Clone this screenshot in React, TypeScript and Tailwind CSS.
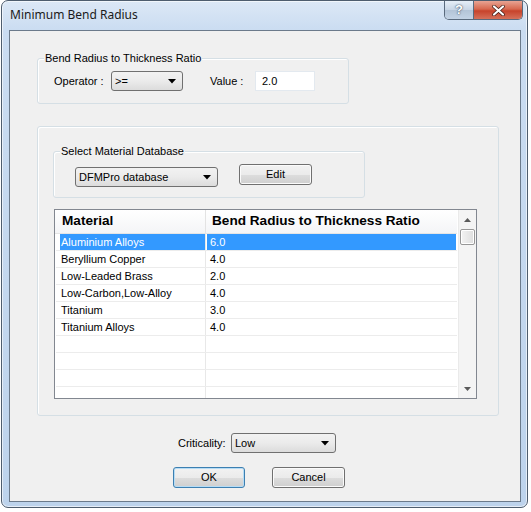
import React from "react";

const rows: [string, string][] = [
  ["Aluminium Alloys", "6.0"],
  ["Beryllium Copper", "4.0"],
  ["Low-Leaded Brass", "2.0"],
  ["Low-Carbon,Low-Alloy", "4.0"],
  ["Titanium", "3.0"],
  ["Titanium Alloys", "4.0"],
  ["", ""],
  ["", ""],
  ["", ""],
  ["", ""],
];

function Arrow() {
  return (
    <svg width="8" height="5" viewBox="0 0 8 5" className="shrink-0">
      <path d="M0 0 H8 L4 4.5 Z" fill="#000" />
    </svg>
  );
}

function Combo({ value, width }: { value: string; width: string }) {
  return (
    <div
      className={`${width} h-[20px] flex items-center justify-between pl-[3px] pr-[6px] border border-[#707070] rounded-[3px] bg-gradient-to-b from-[#f2f2f2] via-[#ebebeb] to-[#dcdcdc] text-[11px] text-black`}
    >
      <span>{value}</span>
      <Arrow />
    </div>
  );
}

function Button({ label, width, focused }: { label: string; width: string; focused?: boolean }) {
  return (
    <button
      className={`${width} h-[21px] rounded-[3px] border ${
        focused ? "border-[#3c7fb1] shadow-[inset_0_0_0_1px_#b6dcf5]" : "border-[#707070] shadow-[inset_0_0_0_1px_#fbfbfb]"
      } bg-[linear-gradient(#f2f2f2_0%,#ebebeb_50%,#dddddd_51%,#cfcfcf_100%)] text-[11px] text-black`}
    >
      {label}
    </button>
  );
}

function Group({ title, className, children }: { title: string; className: string; children: React.ReactNode }) {
  return (
    <div className={`relative border border-[#d5dfe5] rounded-[3px] shadow-[inset_1px_1px_0_#fff] ${className}`}>
      <span className="absolute left-[6px] -top-[8px] px-[1px] bg-[#f0f0f0] text-[11px] leading-[14px] text-black">
        {title}
      </span>
      {children}
    </div>
  );
}

export default function App() {
  return (
    <div
      className="w-[531px] h-[512px] bg-white overflow-hidden"
      style={{ fontFamily: '"Liberation Sans", Arial, sans-serif' }}
    >
      <div className="ml-[1px] w-[527px] h-[508px] rounded-[7px] border border-[#4e5d6e] bg-[linear-gradient(#dce8f6_0px,#cadcf1_30px,#bdd3ec_100%)] shadow-[inset_0_0_0_1px_rgba(255,255,255,0.6)] flex flex-col">
        {/* title bar */}
        <div className="h-[29px] flex items-start justify-between shrink-0">
          <span
            className="ml-[8px] mt-[5px] text-[12px] text-[#1a1a1a]"
            style={{ fontFamily: '"Noto Sans", "Open Sans", sans-serif' }}
          >
            Minimum Bend Radius
          </span>
          <div className="flex mr-[4px] h-[19px] rounded-b-[5px] border border-t-0 border-[#5a6a7d] overflow-hidden">
            <div className="w-[29px] flex items-center justify-center bg-[linear-gradient(#e6eef7,#c7d5e5_50%,#b3c4d7_51%,#c3d3e5)] border-r border-[#5a6a7d]">
              <span className="text-[13px] font-bold text-white [text-shadow:0_0_2px_#44546a,0_0_1px_#44546a]">?</span>
            </div>
            <div className="w-[48px] flex items-center justify-center bg-[linear-gradient(#e8a493,#d7684f_45%,#c7432b_55%,#d5705a)]">
              <svg width="13" height="11" viewBox="0 0 13 11">
                <path d="M2 1.5 L11 9.5 M11 1.5 L2 9.5" stroke="#3c1a14" strokeWidth="3.6" strokeLinecap="round" />
                <path d="M2 1.5 L11 9.5 M11 1.5 L2 9.5" stroke="#fff" strokeWidth="2.2" strokeLinecap="round" />
              </svg>
            </div>
          </div>
        </div>

        {/* client area */}
        <div className="ml-[7px] w-[512px] h-[472px] border border-[#6b7a8b] bg-[#f0f0f0] flex flex-col text-[11px] text-black">
          <Group title="Bend Radius to Thickness Ratio" className="ml-[27px] mt-[27px] w-[312px] h-[46px]">
            <div className="flex items-center mt-[12px]">
              <span className="ml-[16px] w-[57px]">Operator :</span>
              <Combo value=">=" width="w-[72px]" />
              <span className="ml-[27px] w-[45px]">Value :</span>
              <div className="w-[60px] h-[20px] bg-white border border-[#e3e9ef] flex items-center pl-[6px]">2.0</div>
            </div>
          </Group>

          <div className="ml-[27px] mt-[22px] w-[462px] h-[290px] border border-[#d5dfe5] rounded-[3px] shadow-[inset_1px_1px_0_#fff] flex flex-col">
            <Group title="Select Material Database" className="ml-[15px] mt-[24px] w-[312px] h-[47px]">
              <div className="flex items-start mt-[12px]">
                <div className="ml-[21px] mt-[3px]">
                  <Combo value="DFMPro database" width="w-[143px]" />
                </div>
                <div className="ml-[21px]">
                  <Button label="Edit" width="w-[73px]" />
                </div>
              </div>
            </Group>

            {/* table */}
            <div className="ml-[16px] mt-[11px] w-[423px] h-[190px] border border-[#828790] bg-white flex overflow-hidden">
              <div className="w-[403px] flex flex-col">
                <div className="h-[24px] flex shrink-0 bg-gradient-to-b from-white to-[#f4f5f7] border-b border-[#e5e5e5] font-bold text-[13.6px]">
                  <div className="w-[151px] flex items-center pl-[7px] border-r border-[#e3e3e3]">Material</div>
                  <div className="flex-1 flex items-center pl-[6px]">Bend Radius to Thickness Ratio</div>
                </div>
                {rows.map(([name, ratio], i) => {
                  const sel = i === 0;
                  return (
                    <div key={i} className="h-[17px] flex shrink-0 ml-[1px] border-b border-[#ececec] text-[11px]">
                      <div className="w-[150px] pl-[4px] border-r border-[#e8e8e8] flex">
                        <div className={`flex-1 flex items-center pl-[1px] ${sel ? "bg-[#3399ff] text-white" : ""}`}>{name}</div>
                      </div>
                      <div className="w-[250px] pl-[1px] flex">
                        <div className={`flex-1 flex items-center pl-[3px] ${sel ? "bg-[#3399ff] text-white" : ""}`}>{ratio}</div>
                      </div>
                    </div>
                  );
                })}
              </div>
              {/* scrollbar */}
              <div className="w-[18px] ml-[1px] bg-[#f4f4f4] border-l border-[#eaeaea] flex flex-col items-center">
                <div className="h-[19px] flex items-center justify-center">
                  <svg width="7" height="4" viewBox="0 0 7 4">
                    <path d="M0 4 L3.5 0 L7 4 Z" fill="#5a5a5a" />
                  </svg>
                </div>
                <div className="w-[15px] h-[16px] rounded-[2px] border border-[#979797] bg-gradient-to-r from-[#f3f3f3] to-[#dedede] shadow-[inset_0_0_0_1px_#fff]" />
                <div className="flex-1" />
                <div className="h-[19px] flex items-center justify-center">
                  <svg width="7" height="4" viewBox="0 0 7 4">
                    <path d="M0 0 L7 0 L3.5 4 Z" fill="#5a5a5a" />
                  </svg>
                </div>
              </div>
            </div>
          </div>

          <div className="flex items-center mt-[17px] ml-[168px]">
            <span className="w-[53px]">Criticality:</span>
            <Combo value="Low" width="w-[105px]" />
          </div>

          <div className="flex mt-[14px] ml-[163px] gap-[27px]">
            <Button label="OK" width="w-[72px]" focused />
            <Button label="Cancel" width="w-[73px]" />
          </div>
        </div>
      </div>
    </div>
  );
}
